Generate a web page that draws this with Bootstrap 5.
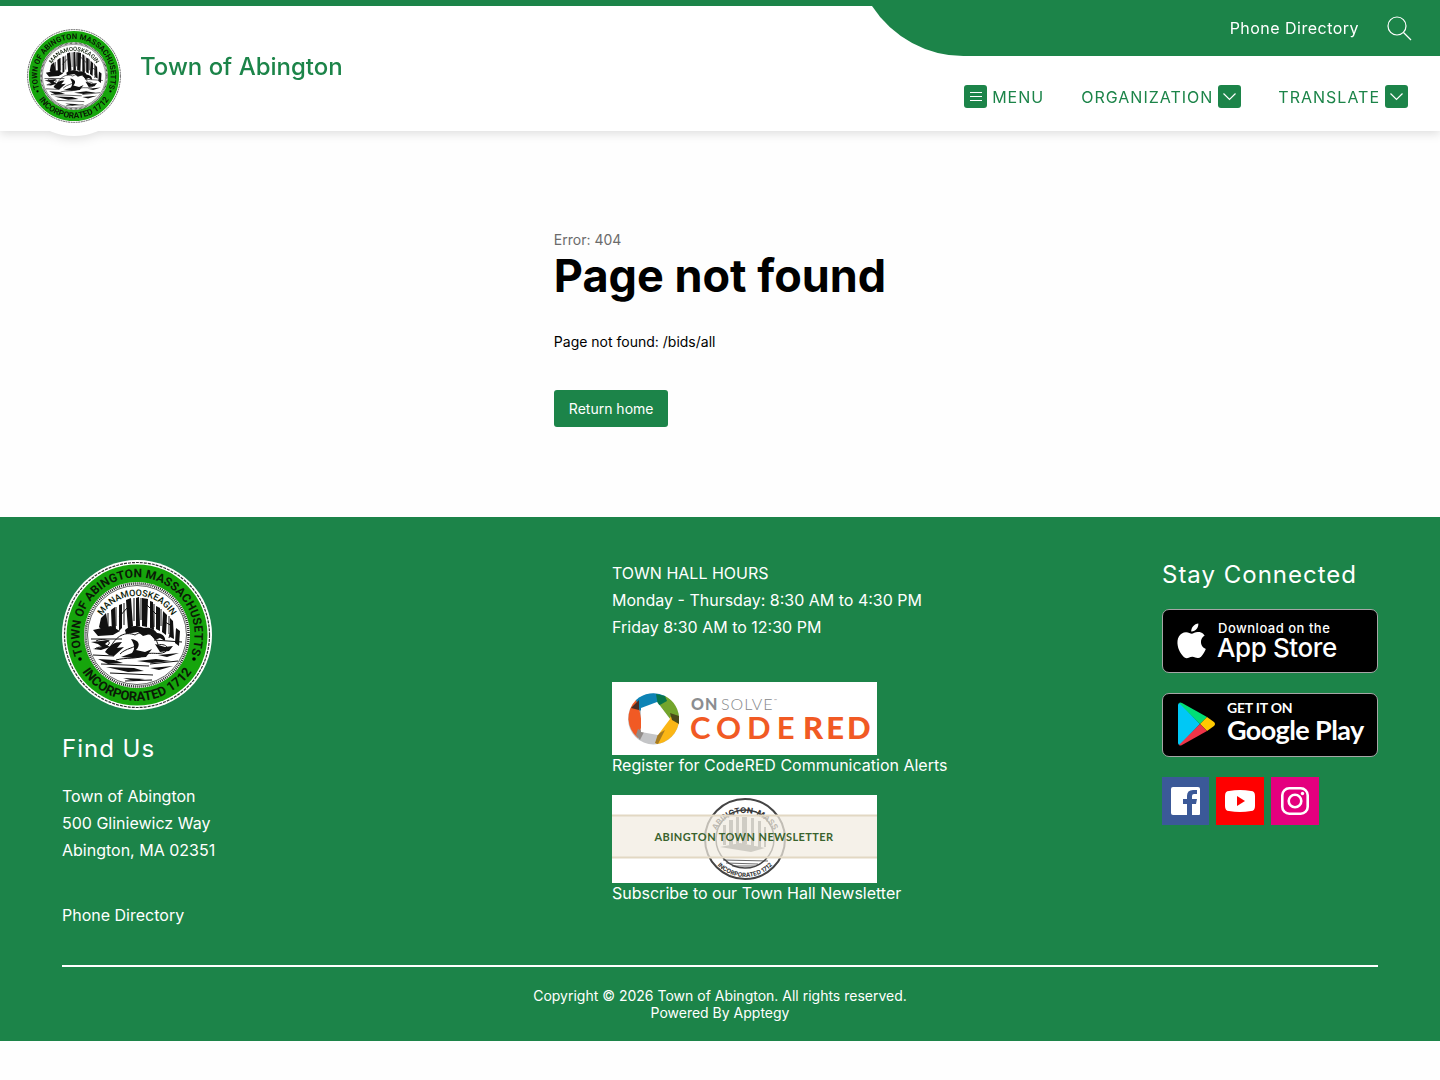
<!DOCTYPE html>
<html lang="en">
<head>
<meta charset="utf-8">
<meta name="viewport" content="width=device-width, initial-scale=1">
<title>Town of Abington - Page not found</title>
<link href="https://cdn.jsdelivr.net/npm/bootstrap@5.3.0/dist/css/bootstrap.min.css" rel="stylesheet">
<style>
:root { --town-green: #1c8449; }
body { font-family: Inter, "Liberation Sans", sans-serif; font-size: 16px; color: #000; background: #fefefe; }
a { color: inherit; text-decoration: none; }
a:hover { text-decoration: underline; }
svg text { font-family: inherit; }
.site-header { border-top: 6px solid var(--town-green); background: #fff; filter: drop-shadow(0 3px 5px rgba(0,0,0,.12)); }
.brand { padding: 22px 0 7px 26px; gap: 18px; color: var(--town-green); }
.brand-name { font-size: 24px; font-weight: 500; line-height: 30px; margin-top: 24px; }
.brand-seal { position: relative; width: 96px; height: 96px; }
.brand-seal::before { content: ""; position: absolute; inset: -12px; border-radius: 50%; background: #fff; }
.brand-seal svg { position: relative; }
.top-strip { width: 568px; max-width: 100%; height: 50px; color: #fff; }
.top-strip-fill { background: var(--town-green); padding: 0 28px 6px 0; gap: 27px; letter-spacing: .03em; }
.icon-btn { background: none; border: 0; padding: 0; color: inherit; }
.main-nav { height: 75px; padding: 6px 32px 0 0; gap: 37px; color: var(--town-green); }
.main-nav button { gap: 5px; letter-spacing: 1px; line-height: 24px; }
.nav-tile { background: var(--town-green); border-radius: 3px; }
.not-found { padding: 100px 16px 90px; font-size: 14px; line-height: 18px; }
.not-found h1 { font-size: 45px; line-height: 54px; font-weight: 700; }
.error-code { color: #6b6b6b; }
.not-found p { margin: 30px 0 39px; }
.home-btn { --bs-btn-bg: var(--town-green); --bs-btn-color: #fff; --bs-btn-hover-bg: #156a3a; --bs-btn-hover-color: #fff; font-size: 14px; line-height: 19px; padding: 9px 15px; border: 0; border-radius: 3px; }
.site-footer { background: var(--town-green); color: #fff; padding: 43px 62px 20px; }
.footer-cols { display: grid; grid-template-columns: 1fr 1fr 216px; padding-bottom: 36px; border-bottom: 2px solid #fff; }
.footer-text { line-height: 27px; }
.footer-seal { margin-bottom: 24px; }
.footer-title { font-size: 24px; line-height: 30px; font-weight: 400; letter-spacing: 1px; margin: 0 0 19px; }
.footer-phone { margin-top: 38px; }
.hours { margin-bottom: 41px; }
.promo { line-height: 20px; }
.stack-gap { margin-top: 20px; }
.social-row { gap: 7px; }
.store-link { border: 1px solid #a6a6a6; border-radius: 7px; background: #000; overflow: hidden; }
.legal { font-size: 14px; line-height: 17px; padding-top: 20px; }
.seal-type { font-family: Roboto, "Liberation Sans", sans-serif; }
.logo-type { font-family: Lato, sans-serif; }
@media (max-width: 900px) { .footer-cols { grid-template-columns: 1fr; gap: 32px; } .site-header { flex-wrap: wrap; } }
</style>
</head>
<body>
<svg width="0" height="0" class="position-absolute" aria-hidden="true">
  <defs>
    <path id="arcName" d="M38 91A40 40 0 1 1 112 91"/>
    <path id="arcBottom" d="M9 75A66 66 0 0 0 141 75"/>
    <path id="arcRing" d="M26 105A57.500 57.500 0 1 1 124 105"/>
    <symbol id="seal" viewBox="0 0 150 150">
      <circle cx="75" cy="75" r="75" fill="#fff"/>
      <circle cx="75" cy="75" r="72.500" fill="none" stroke="#333" stroke-width="1.200" stroke-dasharray="3 1"/>
      <circle cx="75" cy="75" r="70.500" fill="#16a50c"/>
      <circle cx="75" cy="75" r="53" fill="#fff"/>
      <circle cx="75" cy="75" r="51.500" fill="none" stroke="#222" stroke-width="2.500" stroke-dasharray="1 1"/>
      <circle cx="75" cy="75" r="49.500" fill="#fff" stroke="#222" stroke-width=".7"/>
      <g fill="#111">
        <path d="M39 58l5-5 3 18-3 3-7-7zM49 50l4-3 1 23-4 3zM57 45l3-1v24l-3 3zM64 40l5-2 2 28-5 3-1-13zM74 38l3-1 1 29-4 1zM80 38l6 1-1 28-5-1zM88 41l3 1 1 28-4-2zM94 46l4 2v23l-4-2zM101 51l4 4-1 20-4-3zM108 58l3 3 1 18-4-2zM114 68l4 3-1 15-4-3z"/>
        <path d="M31 70l18-4 9 5-7 4-15 1zM63 70c5-5 13-5 19-2 4-1 10 0 13 5 5 0 9 4 8 8l-5-3-5 2-5-6-7 2-5-4-12 2zM43 92c5-7 9-10 17-10l-5 6 7-1-10 9-5-1zM69 79c8 1 10 6 5 11l9 2 7-3-6 8-13 1-12-1 11-4c3-4 3-8-1-14zM93 84l10 3 8-1-4 5-9 1z"/>
        <path d="M29 82l19-2-5 4 5 3-9 3-8-1 9-2-4-3zM36 99l16 1 9 3-15 1zM44 107l28 1 10 3-16 1zM75 101l19-2 15 2-19 2zM88 108l23-2-14 4zM61 118l22 1-11 2zM96 95l21-2-12 4z"/>
      </g>
      <g fill="none" stroke="#111" stroke-width="1">
        <path d="M46 53v14M54 47v19M62 43v22M72 38v23M79 38v22M92 44v23M99 49v17M107 56v18M29 79h31M92 80l28 2M31 95l21 1M88 104l28-3M39 104l48 2M48 113l43 2M63 121l27-1M103 62l7 4-3 12M65 48l-8 9M83 43l11 11"/>
        <path d="M48 88c6-12 15-17 25-13 9-6 21 0 23 10 7-2 13 3 7 7-7 3-12 0-18 2-9 6-21 3-31 6M58 94c6-6 15-6 18-10M34 81c5-3 15-1 13 3-3 4-12 2-14 5"/>
      </g>
      <g fill="#0a1a06" font-weight="700" text-anchor="middle">
        <text class="seal-type" font-size="12"><textPath href="#arcRing" startOffset="50%">TOWN OF ABINGTON MASSACHUSETTS</textPath></text>
        <text class="seal-type" font-size="13"><textPath href="#arcBottom" startOffset="50%">INCORPORATED 1712</textPath></text>
        <text class="seal-type" font-size="9" font-weight="500"><textPath href="#arcName" startOffset="50%">MANAMOOSKEAGIN</textPath></text>
      </g>
      <circle cx="18" cy="99" r="1.800"/><circle cx="132" cy="99" r="1.800"/>
    </symbol>
  </defs>
</svg>

<header class="site-header d-flex justify-content-between position-relative">
  <a href="#" class="brand d-flex align-items-start text-decoration-none">
    <span class="brand-seal d-block"><svg class="d-block" width="96" height="96" role="img" aria-label="Town seal"><use href="#seal"/></svg></span>
    <span class="brand-name">Town of Abington</span>
  </a>
  <div class="d-flex flex-column align-items-end">
    <div class="top-strip d-flex">
      <svg width="93" height="50" class="flex-shrink-0" aria-hidden="true"><path d="M0 0A110 110 0 0 0 93 50V0z" fill="#1c8449"/></svg>
      <div class="top-strip-fill d-flex flex-fill justify-content-end align-items-center">
        <a href="#">Phone Directory</a>
        <button type="button" class="icon-btn" aria-label="Search">
          <svg class="d-block" width="26" height="26" viewBox="0 0 26 26" fill="none" stroke="#fff" stroke-width="1.200"><circle cx="11" cy="11" r="9"/><path d="M17.500 17.500L25 25"/></svg>
        </button>
      </div>
    </div>
    <nav class="main-nav d-flex align-items-center" aria-label="Main">
      <button type="button" class="icon-btn d-flex align-items-center"><svg class="nav-tile" width="23" height="23" viewBox="0 0 23 23" stroke="#fff" aria-hidden="true"><path d="M6 7.500h12M6 11.500h12M6 15.500h12"/></svg>MENU</button>
      <button type="button" class="icon-btn d-flex align-items-center">ORGANIZATION<svg class="nav-tile" width="23" height="23" viewBox="0 0 23 23" fill="none" stroke="#fff" stroke-width="1.200" aria-hidden="true"><path d="M5.500 8.500l6 6 6-6"/></svg></button>
      <button type="button" class="icon-btn d-flex align-items-center">TRANSLATE<svg class="nav-tile" width="23" height="23" viewBox="0 0 23 23" fill="none" stroke="#fff" stroke-width="1.200" aria-hidden="true"><path d="M5.500 8.500l6 6 6-6"/></svg></button>
    </nav>
  </div>
</header>

<main class="not-found d-flex justify-content-center">
  <div>
    <div class="error-code">Error: 404</div>
    <h1 class="m-0">Page not found</h1>
    <p>Page not found: /bids/all</p>
    <a href="#" class="btn home-btn">Return home</a>
  </div>
</main>

<footer class="site-footer">
  <div class="footer-cols">
    <div>
      <svg class="footer-seal d-block" width="150" height="150" role="img" aria-label="Town seal"><use href="#seal"/></svg>
      <h2 class="footer-title">Find Us</h2>
      <address class="footer-text m-0">Town of Abington<br>500 Gliniewicz Way<br>Abington, MA 02351</address>
      <a href="#" class="footer-text footer-phone d-inline-block">Phone Directory</a>
    </div>
    <div>
      <div class="footer-text hours">TOWN HALL HOURS<br>Monday - Thursday: 8:30 AM to 4:30 PM<br>Friday 8:30 AM to 12:30 PM</div>
      <a href="#" class="promo d-block mb-3">
        <svg class="d-block" width="265" height="73" viewBox="0 0 265 73" role="img" aria-label="OnSolve CodeRED">
          <path fill="#fff" d="M0 0h265v73H0z"/>
          <circle cx="41.500" cy="37" r="25.500" fill="#c4c5c7"/>
          <path fill="#0d83b5" d="M24 18A25.500 25.500 0 0 1 53 14L41 24l-17 6z"/>
          <path fill="#73a52c" d="M53 14a25.500 25.500 0 0 1 14 24l-9-1-12-16z"/>
          <path fill="#fbb615" d="M67 38a25.500 25.500 0 0 1-23 24l3-12 13-17z"/>
          <path fill="#f15a24" d="M24 18a25.500 25.500 0 0 0 2 38l4-14-3-16z"/>
          <path fill="#08754a" d="M44 12l9 2 2 5-9 5z"/><path fill="#4b4b19" d="M58 31l9 3v8l-7-4z"/><path fill="#a77b20" d="M46 52l7-4-7 14-3-1z"/><path fill="#918c89" d="M26 47l6 3-4 8-4-5z"/><path fill="#4b2c24" d="M19 26l8-8v10z"/>
          <path fill="#fff" d="M29 26l16-6 13 17-12 16-17-3z"/>
          <g class="logo-type"><text class="logo-type" x="79" y="28" font-size="16" font-weight="900" fill="#8b8d90" letter-spacing="1">ON</text><text class="logo-type" x="109" y="28" font-size="16" font-weight="300" fill="#85878a" letter-spacing="1">SOLVE</text><text class="logo-type" x="162" y="20" font-size="4" fill="#85878a">™</text>
          <text class="logo-type" x="78" y="57" font-size="31" font-weight="700" fill="#f15a24" letter-spacing="6">CODE</text><text class="logo-type" x="191" y="57" font-size="31" font-weight="900" fill="#f15a24" letter-spacing="3">RED</text></g>
        </svg>Register for CodeRED Communication Alerts</a>
      <a href="#" class="promo d-block pt-1">
        <svg class="d-block" width="265" height="88" viewBox="0 0 265 88" role="img" aria-label="Abington Town Newsletter">
          <defs><path id="newsTop" d="M101 50a32 32 0 1 1 64 0"/><path id="newsBottom" d="M95 44a38 38 0 0 0 76 0"/></defs>
          <path fill="#fff" d="M0 0h265v88H0z"/>
          <g fill="none" stroke="#444"><circle cx="133" cy="44" r="40" stroke-width="2"/><circle cx="133" cy="44" r="29" stroke-width="1.500"/><path d="M111 65l45 1M114 68l32 1M120 71h23" stroke-width=".8"/></g>
          <g fill="#333" font-size="8" font-weight="700" text-anchor="middle"><text><textPath href="#newsTop" startOffset="50%">ABINGTON-MASS</textPath></text><text font-size="6"><textPath href="#newsBottom" startOffset="50%">INCORPORATED 1712</textPath></text></g>
          <path fill="#f1ece0" fill-opacity=".72" stroke="#e2d8c3" stroke-width="2" d="M-2 20.500h269v42H-2z"/>
          <path fill="#aaa79f" opacity=".5" d="M111 30h3v20h-3zM117 25h4v25h-4zM124 22h3v27h-3zM130 22h5v27h-5zM139 23h3v28h-3zM146 26h3v26h-3zM152 32h2v20h-2zM108 52l20-4 25 5-14 4z"/>
          <text class="logo-type" x="132" y="46" font-size="11" font-weight="700" fill="#3a632e" text-anchor="middle" letter-spacing=".4">ABINGTON TOWN NEWSLETTER</text>
        </svg>Subscribe to our Town Hall Newsletter</a>
    </div>
    <div>
      <h2 class="footer-title">Stay Connected</h2>
      <a href="#" class="store-link d-block" aria-label="Download on the App Store">
        <svg class="d-block" width="214" height="62" viewBox="0 0 214 62" fill="#fff">
          <path transform="translate(9 11) scale(1.470)" d="M19.700 14.300c0-3 2.400-4.400 2.500-4.500-1.400-2-3.500-2.300-4.300-2.300-1.800-.2-3.500 1.100-4.500 1.100-.9 0-2.300-1.100-3.900-1-2 0-3.800 1.200-4.800 2.900-2.100 3.600-.5 8.900 1.500 11.800 1 1.400 2.200 3 3.700 3 1.500-.1 2.100-1 3.900-1s2.300 1 3.900.9c1.600 0 2.700-1.400 3.600-2.900 1.200-1.600 1.600-3.200 1.700-3.300-.1 0-3.300-1.200-3.300-4.700zM16.700 5.500c.8-1 1.400-2.400 1.200-3.800-1.200.1-2.700.8-3.500 1.800-.8.900-1.500 2.300-1.300 3.700 1.400.1 2.800-.7 3.600-1.700z"/>
          <text x="55" y="23" font-size="13" font-weight="500" letter-spacing=".5">Download on the</text>
          <text x="54" y="47" font-size="26" font-weight="500" letter-spacing="-.4">App Store</text>
        </svg></a>
      <a href="#" class="store-link stack-gap d-block" aria-label="Get it on Google Play">
        <svg class="d-block" width="214" height="62" viewBox="0 0 214 62">
          <path fill="#00c8f5" d="M15 11q0-2 2-2l20 21-20 21q-2 0-2-2z"/><path fill="#00df76" d="M16 9q1-1 3 0l25 14-7 7z"/><path fill="#ffc900" d="M44 23l7 5q2 2 0 4l-7 5-7-7z"/><path fill="#ee3448" d="M16 51q1 1 3 0l25-14-7-7z"/>
          <g fill="#fff"><text class="logo-type" x="64" y="19" font-size="14" font-weight="700" letter-spacing="-.2">GET IT ON</text><text class="logo-type" x="64" y="46" font-size="27" font-weight="700" letter-spacing="-.6">Google Play</text></g>
        </svg></a>
      <div class="social-row stack-gap d-flex">
        <a href="#" aria-label="Facebook"><svg class="d-block" width="47" height="48" viewBox="0 0 47 48"><path fill="#3b5998" d="M0 0h47v48H0z"/><path fill="#fff" d="M11 10h25q2 0 2 2v25q0 1-1 1h-7V27h4l1-5h-5v-3q0-2 2-2h3v-4h-4q-6 0-6 6v3h-4v5h4v11H11q-2 0-2-2V12q0-2 2-2z"/></svg></a>
        <a href="#" aria-label="YouTube"><svg class="d-block" width="48" height="48"><path fill="#f00" d="M0 0h48v48H0z"/><path fill="#fff" d="M13 14q11-2 22 0 4 0 4 5v10q0 5-4 5-11 2-22 0-4 0-4-5V19q0-5 4-5z"/><path fill="#f00" d="M21 19v10l8-5z"/></svg></a>
        <a href="#" aria-label="Instagram"><svg class="d-block" width="48" height="48"><path fill="#e4007e" d="M0 0h48v48H0z"/><g fill="none" stroke="#fff" stroke-width="2.600"><rect x="11.300" y="11.300" width="25.400" height="25.400" rx="7"/><circle cx="24" cy="24" r="6.300"/></g><circle cx="31.500" cy="16.500" r="1.700" fill="#fff"/></svg></a>
      </div>
    </div>
  </div>
  <div class="legal text-center">Copyright © 2026 Town of Abington. All rights reserved.<br>Powered By <a href="#">Apptegy</a></div>
</footer>
<script src="https://cdn.jsdelivr.net/npm/bootstrap@5.3.0/dist/js/bootstrap.bundle.min.js"></script>
</body>
</html>
